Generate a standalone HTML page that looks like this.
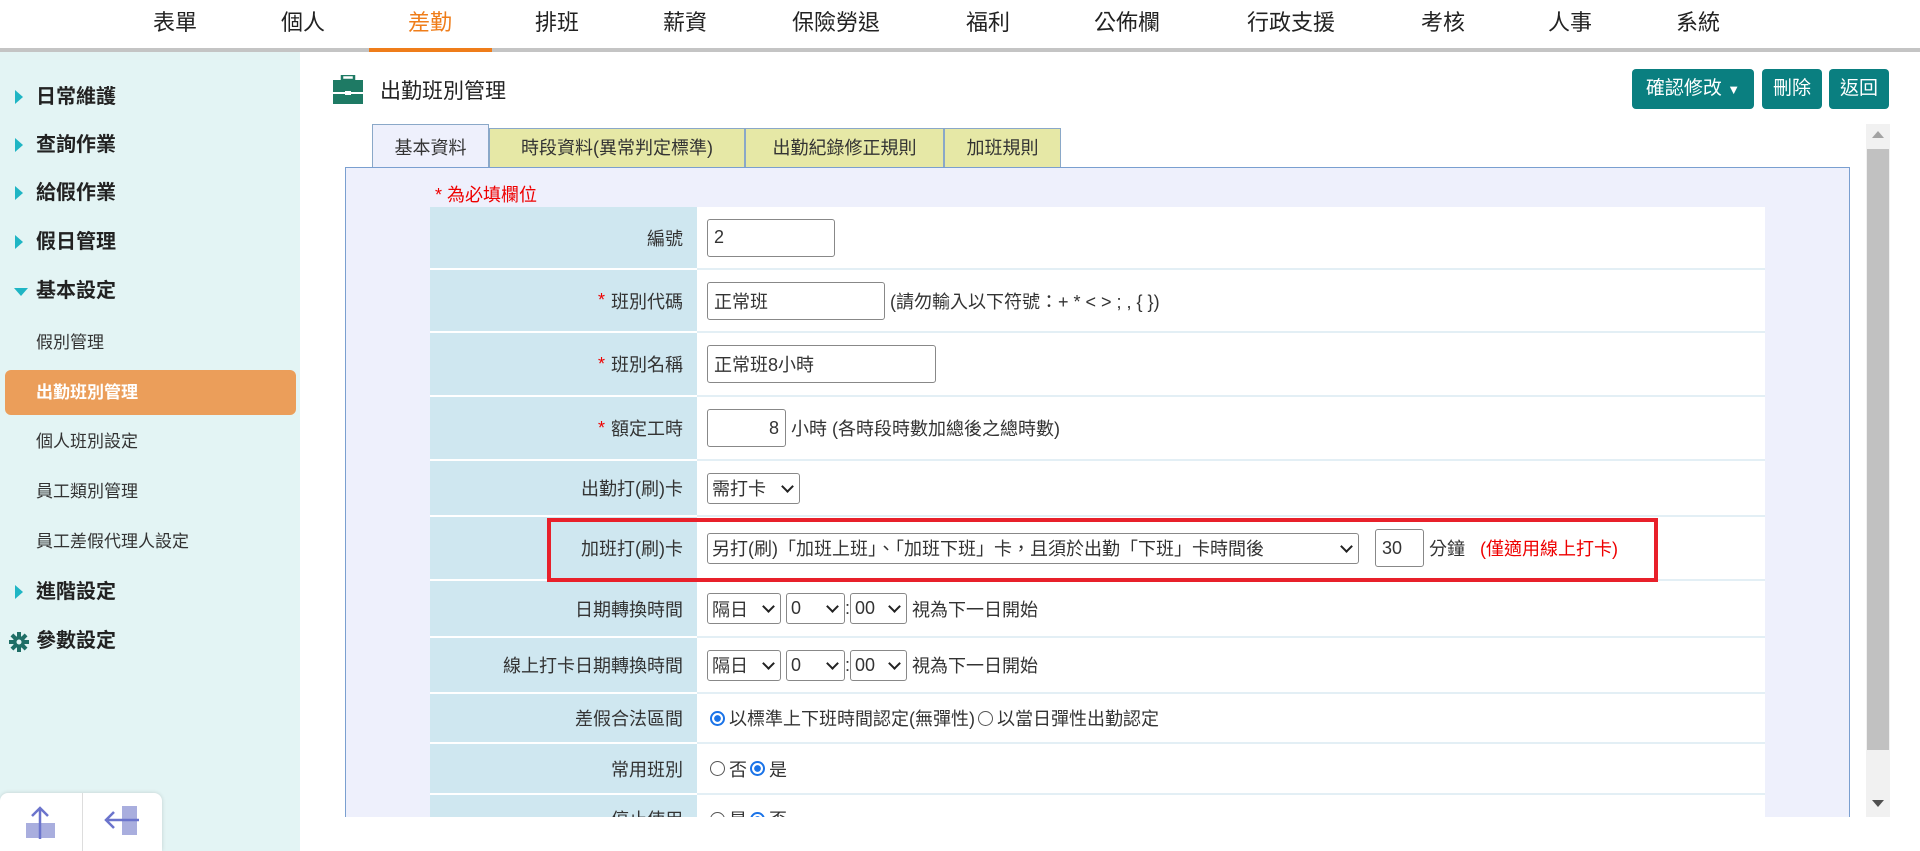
<!DOCTYPE html>
<html><head><meta charset="utf-8"><style>
*{box-sizing:border-box;margin:0;padding:0}
html,body{width:1920px;height:851px;overflow:hidden}
body{background:#fff;font-family:"Liberation Sans","Noto Sans CJK TC",sans-serif;color:#333;position:relative}
.a{position:absolute}
.nav{font-size:22px;color:#222;top:10px;line-height:26px;transform:translateX(-50%);white-space:nowrap}
.side{left:0;top:52px;width:300px;height:799px;background:#e3f4f4}
.si{position:absolute;left:36px;font-size:20px;font-weight:bold;color:#222;line-height:24px;transform:translateY(-50%)}
.ss{position:absolute;left:36px;font-size:17px;color:#333;line-height:22px;transform:translateY(-50%)}
.tri{position:absolute;left:15px;width:0;height:0;border-top:7px solid transparent;border-bottom:7px solid transparent;border-left:8px solid #1fb5c4;transform:translateY(-50%)}
.btn{position:absolute;top:69px;height:40px;background:#0a7f80;color:#fff;border-radius:4px;font-size:19px;line-height:40px;text-align:center}
.tab{position:absolute;top:128px;height:39px;background:#e6e8a6;border:1px solid #8aa8c8;border-bottom:none;font-size:18px;line-height:38px;text-align:center;color:#333}
.row{position:absolute;left:430px;width:1335px;border-bottom:2px solid #e3eff5}
.lab{position:absolute;left:0;top:0;bottom:0;width:267px;background:#cfe7f0;border-bottom:2px solid #fff;margin-bottom:-2px;font-size:18px;text-align:right;padding-right:14px;display:flex;align-items:center;justify-content:flex-end}
.val{position:absolute;left:277px;top:0;bottom:0;display:flex;align-items:center;font-size:18px;color:#333;white-space:nowrap}
.inp{border:1px solid #888;border-radius:3px;height:38px;background:#fff;font-size:18px;padding:0 6px;display:flex;align-items:center}
.sel{border:1px solid #888;border-radius:3px;height:31px;background:#fff;font-size:18px;padding:0 4px;display:flex;align-items:center;justify-content:space-between}
.sel:after{content:"";width:7px;height:7px;border-right:2px solid #222;border-bottom:2px solid #222;transform:rotate(45deg);margin:-4px 3px 0 6px}
.req{color:#e00;margin-right:6px}
.rad{display:inline-block;width:15px;height:15px;border-radius:50%;border:1px solid #555;margin:0 4px 0 3px;vertical-align:middle}
.rad.on{border:2px solid #1a73e8;background:radial-gradient(#1a73e8 40%,#fff 46%)}
</style></head><body>
<div class="nav a" style="left:175px">表單</div>
<div class="nav a" style="left:303px">個人</div>
<div class="nav a" style="left:430px;color:#ef7d1a">差勤</div>
<div class="nav a" style="left:557px">排班</div>
<div class="nav a" style="left:685px">薪資</div>
<div class="nav a" style="left:836px">保險勞退</div>
<div class="nav a" style="left:988px">福利</div>
<div class="nav a" style="left:1127px">公佈欄</div>
<div class="nav a" style="left:1291px">行政支援</div>
<div class="nav a" style="left:1443px">考核</div>
<div class="nav a" style="left:1570px">人事</div>
<div class="nav a" style="left:1698px">系統</div>
<div class="a" style="left:0;top:48px;width:1920px;height:4px;background:#c4c4c4"></div>
<div class="a" style="left:369px;top:48px;width:123px;height:4px;background:#ef7d1a"></div>

<div class="side a">
<div class="tri" style="top:45px"></div><div class="si" style="top:45px">日常維護</div>
<div class="tri" style="top:93px"></div><div class="si" style="top:93px">查詢作業</div>
<div class="tri" style="top:141px"></div><div class="si" style="top:141px">給假作業</div>
<div class="tri" style="top:190px"></div><div class="si" style="top:190px">假日管理</div>
<div style="position:absolute;left:14px;top:236px;border-left:7px solid transparent;border-right:7px solid transparent;border-top:8px solid #1fb5c4"></div><div class="si" style="top:239px">基本設定</div>
<div class="ss" style="top:291px">假別管理</div>
<div style="position:absolute;left:5px;top:318px;width:291px;height:45px;background:#eb9e5a;border-radius:6px"></div>
<div class="ss" style="top:341px;color:#fff;font-weight:bold">出勤班別管理</div>
<div class="ss" style="top:390px">個人班別設定</div>
<div class="ss" style="top:440px">員工類別管理</div>
<div class="ss" style="top:490px">員工差假代理人設定</div>
<div class="tri" style="top:540px"></div><div class="si" style="top:540px">進階設定</div>
<svg style="position:absolute;left:9px;top:580px" width="20" height="20" viewBox="0 0 20 20"><g fill="#1f6e66"><circle cx="10" cy="10" r="6"/><rect x="8" y="0" width="4" height="20"/><rect x="0" y="8" width="20" height="4"/><rect x="8" y="0" width="4" height="20" transform="rotate(45 10 10)"/><rect x="8" y="0" width="4" height="20" transform="rotate(-45 10 10)"/></g><circle cx="10" cy="10" r="2.5" fill="#e3f4f4"/></svg>
<div class="si" style="top:589px">參數設定</div>
</div>

<svg class="a" style="left:333px;top:75px" width="30" height="29"><rect x="9" y="0" width="12" height="5" fill="none" stroke="#1e7a64" stroke-width="2.5"/><rect x="0" y="5" width="30" height="12" fill="#1e7a64"/><rect x="0" y="19" width="30" height="10" fill="#1e7a64"/><rect x="12" y="16" width="6" height="4" fill="#fff"/></svg>
<div class="a" style="left:380px;top:75px;font-size:21px;color:#222">出勤班別管理</div>

<div class="btn" style="left:1632px;width:122px">確認修改 <span style="font-size:13px">▼</span></div>
<div class="btn" style="left:1762px;width:60px">刪除</div>
<div class="btn" style="left:1829px;width:60px">返回</div>

<div class="tab" style="left:372px;top:124px;width:117px;height:44px;background:#eef0fc;line-height:46px">基本資料</div>
<div class="tab" style="left:489px;width:256px">時段資料(異常判定標準)</div>
<div class="tab" style="left:745px;width:199px">出勤紀錄修正規則</div>
<div class="tab" style="left:944px;width:117px">加班規則</div>

<div class="a" style="left:345px;top:167px;width:1505px;height:650px;background:#eef0fc;border:1px solid #7a9fd0;border-bottom:none"></div>
<div class="a" style="left:435px;top:181px;font-size:18px;color:#e00">* 為必填欄位</div>
<div class="a" style="left:430px;top:207px;width:1335px;height:610px;background:#fff"></div>

<div class="row" style="top:207px;height:63px"><div class="lab">編號</div><div class="val"><div class="inp" style="width:128px">2</div></div></div>
<div class="row" style="top:270px;height:63px"><div class="lab"><span class="req">*</span>班別代碼</div><div class="val"><div class="inp" style="width:178px">正常班</div>&nbsp;(請勿輸入以下符號：+ * &lt; &gt; ; , { })</div></div>
<div class="row" style="top:333px;height:64px"><div class="lab"><span class="req">*</span>班別名稱</div><div class="val"><div class="inp" style="width:229px">正常班8小時</div></div></div>
<div class="row" style="top:397px;height:64px"><div class="lab"><span class="req">*</span>額定工時</div><div class="val"><div class="inp" style="width:79px;justify-content:flex-end">8</div>&nbsp;小時 (各時段時數加總後之總時數)</div></div>
<div class="row" style="top:461px;height:56px"><div class="lab">出勤打(刷)卡</div><div class="val"><div class="sel" style="width:93px">需打卡</div></div></div>
<div class="row" style="top:517px;height:64px"><div class="lab">加班打(刷)卡</div><div class="val"><div class="sel" style="width:652px">另打(刷)「加班上班」、「加班下班」卡，且須於出勤「下班」卡時間後</div><div class="inp" style="width:49px;margin-left:16px">30</div>&nbsp;分鐘&nbsp;&nbsp;&nbsp;<span style="color:#e00">(僅適用線上打卡)</span></div></div>
<div class="row" style="top:581px;height:57px"><div class="lab">日期轉換時間</div><div class="val"><div class="sel" style="width:74px">隔日</div>&nbsp;<div class="sel" style="width:59px">0</div>:<div class="sel" style="width:57px">00</div>&nbsp;視為下一日開始</div></div>
<div class="row" style="top:638px;height:56px"><div class="lab">線上打卡日期轉換時間</div><div class="val"><div class="sel" style="width:74px">隔日</div>&nbsp;<div class="sel" style="width:59px">0</div>:<div class="sel" style="width:57px">00</div>&nbsp;視為下一日開始</div></div>
<div class="row" style="top:694px;height:50px"><div class="lab">差假合法區間</div><div class="val"><span class="rad on"></span>以標準上下班時間認定(無彈性)<span class="rad"></span>以當日彈性出勤認定</div></div>
<div class="row" style="top:744px;height:51px"><div class="lab">常用班別</div><div class="val"><span class="rad"></span>否<span class="rad on"></span>是</div></div>
<div class="row" style="top:795px;height:50px"><div class="lab">停止使用</div><div class="val"><span class="rad"></span>是<span class="rad on"></span>否</div></div>

<div class="a" style="left:547px;top:518px;width:1111px;height:64px;border:4px solid #e8202a"></div>

<div class="a" style="left:300px;top:817px;width:1620px;height:34px;background:#fff"></div>
<div class="a" style="left:0;top:793px;width:162px;height:58px;background:#fff;border-radius:8px 8px 0 0;box-shadow:0 0 4px rgba(0,0,0,.15)">
<div style="position:absolute;left:82px;top:0;width:1px;height:58px;background:#ddd"></div>
<svg style="position:absolute;left:25px;top:12px" width="32" height="36"><rect x="1" y="18" width="29" height="15" fill="#a9aede"/><path d="M15 34V3M7 11l8-8 8 8" stroke="#6b74cc" stroke-width="2.5" fill="none"/></svg>
<svg style="position:absolute;left:103px;top:12px" width="36" height="36"><rect x="19" y="1" width="15" height="29" fill="#a9aede"/><path d="M36 15H3M11 7l-8 8 8 8" stroke="#6b74cc" stroke-width="2.5" fill="none"/></svg>
</div>

<div class="a" style="left:1866px;top:124px;width:24px;height:693px;background:#f1f1f1"></div>
<div class="a" style="left:1867px;top:149px;width:22px;height:601px;background:#c1c1c1"></div>
<div class="a" style="left:1872px;top:131px;border-left:6px solid transparent;border-right:6px solid transparent;border-bottom:7px solid #a3a3a3"></div>
<div class="a" style="left:1872px;top:800px;border-left:6px solid transparent;border-right:6px solid transparent;border-top:7px solid #505050"></div>
</body></html>
